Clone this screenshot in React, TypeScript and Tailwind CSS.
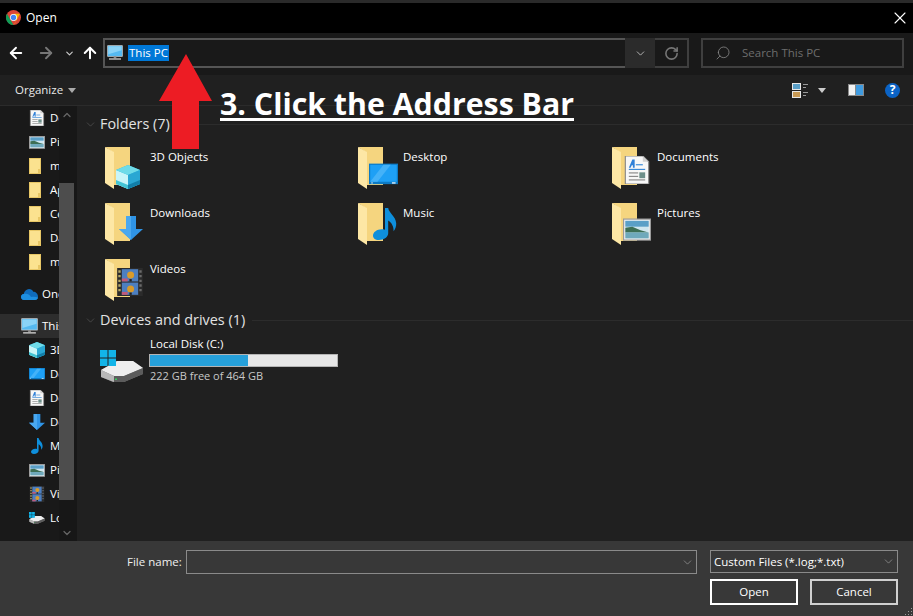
import { ReactNode } from "react";
import { ArrowLeft, ArrowRight, ArrowUp, ChevronDown, RotateCw, Search, X } from "lucide-react";

const Icon = ({ size, children }: { size: number; children: ReactNode }) => (
  <svg width={size} height={size} viewBox="0 0 24 24" className="block shrink-0">
    {children}
  </svg>
);

const Cube = ({ size = 24 }: { size?: number }) => (
  <Icon size={size}>
    <polygon points="12,0 24,5 24,19 12,24 0,19 0,5" fill="#29b6d8" />
    <polygon points="0,5 12,10 12,24 0,19" fill="#c9f5f8" />
    <polygon points="12,0 24,5 12,10 0,5" fill="#6fdbe8" />
    <polygon points="12,10 24,5 24,19 12,24" fill="#2aa7d3" />
    <polygon points="0,15 12,20 12,24 0,19" fill="#43c4d4" />
    <polygon points="12,20 24,15 24,19 12,24" fill="#127ea8" />
  </Icon>
);

const Screen = ({ size = 24 }: { size?: number }) => (
  <Icon size={size}>
    <rect x="0" y="3" width="24" height="17" fill="#0d7ac4" />
    <rect x="1" y="4" width="22" height="14" fill="#1ea0f5" />
    <polygon points="1,18 12,4 18,4 7,18" fill="#44b2f8" />
    <rect x="2" y="18.500" width="1" height="1" fill="#fff" />
    <rect x="19" y="18.500" width="3" height="1" fill="#fff" />
  </Icon>
);

const Doc = ({ size = 24 }: { size?: number }) => (
  <Icon size={size}>
    <polygon points="2,0 17,0 22,5 22,24 2,24" fill="#f7f7f7" stroke="#8a8a8a" />
    <polygon points="17,0 22,5 17,5" fill="#cfcfcf" />
    <polygon points="5,10 8,3 10,3 10,10 8.500,10 8.500,8 7.500,8 6.500,10" fill="#2f80d8" />
    <rect x="11" y="7" width="6" height="1" fill="#3a8ad8" />
    <rect x="5" y="11" width="14" height="1" fill="#3a8ad8" />
    <rect x="5" y="14" width="8" height="1" fill="#8a8a8a" />
    <rect x="14" y="14" width="5" height="5" fill="#6d8f8a" />
    <rect x="5" y="17" width="8" height="1" fill="#8a8a8a" />
    <rect x="5" y="20" width="14" height="1" fill="#8a8a8a" />
  </Icon>
);

const Down = ({ size = 24 }: { size?: number }) => (
  <Icon size={size}>
    <polygon points="7,0 17,0 17,13 24,13 12,24 0,13 7,13" fill="#2f94e6" />
    <polygon points="7,0 12,0 12,24 0,13 7,13" fill="#4aa8ef" />
  </Icon>
);

const Note = ({ size = 24 }: { size?: number }) => (
  <Icon size={size}>
    <path d="M12 0h2.400c.6 4 5.600 6 6 11.500.2 2.400-.8 4.600-2 6 .4-3.800-1.800-7-4-8.200V19c0 2.800-3 5-7 5-3 0-4.400-1.500-4.400-3.200 0-2.600 3-4.800 6.500-4.800.9 0 1.800.1 2.500.4z" fill="#0e8fdc" />
  </Icon>
);

const Picture = ({ size = 24 }: { size?: number }) => (
  <Icon size={size}>
    <rect x="0.500" y="3.500" width="23" height="18" fill="#f1f1f1" stroke="#9a9a9a" />
    <rect x="2" y="5" width="20" height="15" fill="#cfe6ef" />
    <rect x="2" y="5" width="20" height="5" fill="#5a9fc7" />
    <polygon points="2,15 2,11 8,10 15,13 22,15" fill="#3d6f55" />
    <rect x="2" y="15" width="20" height="5" fill="#6fa9bb" />
  </Icon>
);

const Film = ({ size = 24 }: { size?: number }) => (
  <Icon size={size}>
    <rect x="1" y="0" width="22" height="24" fill="#2b2b2b" />
    <path d="M2 2h2v2H2zM2 6h2v2H2zM2 10h2v2H2zM2 14h2v2H2zM2 18h2v2H2z" fill="#b5a866" />
    <path d="M20 2h2v2h-2zM20 6h2v2h-2zM20 10h2v2h-2zM20 14h2v2h-2zM20 18h2v2h-2z" fill="#6b6b6b" />
    <rect x="5" y="1" width="14" height="10.500" fill="#4d7fc0" />
    <rect x="5" y="12.500" width="14" height="10.500" fill="#4d7fc0" />
    <circle cx="12.500" cy="6" r="3" fill="#d99b2b" />
    <circle cx="12.500" cy="18" r="3" fill="#d99b2b" />
    <rect x="5" y="9" width="5" height="2.500" fill="#c05a7a" />
    <rect x="5" y="20.500" width="5" height="2.500" fill="#c05a7a" />
    <rect x="11.500" y="9.500" width="2" height="2" fill="#222222" />
    <rect x="11.500" y="21" width="2" height="2" fill="#222222" />
  </Icon>
);

const Drive = ({ size = 24 }: { size?: number }) => (
  <svg width={size} height={size * 0.75} viewBox="0 0 44 33" className="block shrink-0">
    <polygon points="1,20 17,11 33,11 43,18 43,24 24,32 13,32 1,27" fill="#7a7a7a" />
    <polygon points="1,20 17,11 33,11 43,18 24,26 14,26" fill="#eeeeee" />
    <polygon points="1,20 14,26 14,32 1,27" fill="#b8b8b8" />
    <polygon points="14,26 24,26 43,18 43,24 24,32 14,32" fill="#5c5c5c" />
    <rect x="15" y="28.500" width="2" height="1.500" fill="#31d05a" />
    <rect x="0" y="0" width="7.500" height="7.500" fill="#12b4e8" />
    <rect x="8.500" y="0" width="7.500" height="7.500" fill="#12b4e8" />
    <rect x="0" y="8.500" width="7.500" height="7.500" fill="#12b4e8" />
    <rect x="8.500" y="8.500" width="7.500" height="7.500" fill="#12b4e8" />
  </svg>
);

const Monitor = ({ size = 16 }: { size?: number }) => (
  <Icon size={size}>
    <rect x="1" y="1" width="22" height="16" fill="#55b9f0" stroke="#d6d6d6" />
    <polygon points="2,2 22,2 22,8 2,14" fill="#8ad3f7" />
    <rect x="10" y="17" width="4" height="3" fill="#8a8a8a" />
    <rect x="3" y="20" width="18" height="2" fill="#c9c9c9" />
  </Icon>
);

const MiniFolder = () => (
  <svg width="12" height="16" viewBox="0 0 12 16" className="block shrink-0">
    <rect x="0" y="0" width="12" height="16" fill="#fbe28f" />
    <rect x="0.500" y="0.500" width="11" height="15" fill="none" stroke="#e8c766" />
    <rect x="9" y="11" width="3" height="5" fill="#e8c766" />
  </svg>
);

const Cloud = () => (
  <svg width="17" height="11" viewBox="0 0 17 11" className="block shrink-0">
    <path d="M3 11C1 11 0 9.500 0 8c0-1.600 1.200-2.800 2.700-2.900C3.300 2.200 5.500 0 8 0c2 0 3.500 1 4.300 2.700C14.800 2.700 17 4.800 17 7.500 17 9.500 15.700 11 14 11z" fill="#0f6cbd" />
    <path d="M3 11C1 11 0 9.500 0 8c0-1.600 1.200-2.800 2.700-2.900 3.300-1.200 6.300.6 7.300 3 2-.8 4.800-.5 7 .5-.2 1.500-1.300 2.400-3 2.400z" fill="#1e8fe1" />
  </svg>
);

const Folder = ({ children }: { children?: ReactNode }) => (
  <div className="relative h-[44px] w-[45px] shrink-0">
    <svg width="26" height="42" viewBox="0 0 26 42" className="block">
      <polygon points="0,0 25,0 25,38 9,38 9,6" fill="#f5d57f" />
      <polygon points="0,0 9,5 9,42 0,36" fill="#fde7a5" />
    </svg>
    {children}
  </div>
);

const navTop = [
  { icon: <Doc size={16} />, label: "Documents" },
  { icon: <Picture size={16} />, label: "Pictures" },
  { icon: <MiniFolder />, label: "misc" },
  { icon: <MiniFolder />, label: "Apps" },
  { icon: <MiniFolder />, label: "Code" },
  { icon: <MiniFolder />, label: "Data" },
  { icon: <MiniFolder />, label: "media" },
];

const navPc = [
  { icon: <Cube size={16} />, label: "3D Objects" },
  { icon: <Screen size={16} />, label: "Desktop" },
  { icon: <Doc size={16} />, label: "Documents" },
  { icon: <Down size={16} />, label: "Downloads" },
  { icon: <Note size={16} />, label: "Music" },
  { icon: <Picture size={16} />, label: "Pictures" },
  { icon: <Film size={16} />, label: "Videos" },
  { icon: <Drive size={16} />, label: "Local Disk (C:)" },
];

function NavRow({ icon, label, indent = true, selected = false }: { icon: ReactNode; label: string; indent?: boolean; selected?: boolean }) {
  return (
    <div className={`flex h-6 items-center overflow-hidden whitespace-nowrap text-white ${selected ? "bg-[#2d2d2d]" : ""} ${indent ? "pl-[29px]" : "pl-[21px]"}`}>
      <div className="flex w-[21px] shrink-0 items-center justify-start">{icon}</div>
      <span>{label}</span>
    </div>
  );
}

function SectionHeader({ title }: { title: string }) {
  return (
    <div className="flex h-5 items-center">
      <ChevronDown size={13} strokeWidth={1} className="ml-[7px] mr-[3px] text-[#666666]" />
      <span className="text-[14.400px] text-[#e3e3e3]">{title}</span>
      <div className="ml-[7px] h-px flex-1 bg-[#2c2c2c]" />
    </div>
  );
}

function Tile({ label, children }: { label: string; children?: ReactNode }) {
  return (
    <div className="flex h-14 items-start">
      <Folder>{children}</Folder>
      <span className="leading-5 text-white">{label}</span>
    </div>
  );
}

export default function App() {
  return (
    <div className="relative flex h-[616px] w-[913px] flex-col overflow-hidden bg-[#202020] font-['Open_Sans',sans-serif] text-[11.500px] text-white">
      {/* title bar */}
      <div className="flex h-[33px] items-center border-t-[3px] border-[#2a2a2a] bg-black pl-[6px] pr-[3px]">
        <svg width="15" height="15" viewBox="0 0 24 24" className="mt-[-1px] block">
          <circle cx="12" cy="12" r="12" fill="#db4437" />
          <path d="M12 24A12 12 0 0 1 1.600 6L7 15.500z" fill="#0f9d58" />
          <path d="M12 24l5.500-8.500L22.400 6H12a12 12 0 0 1 0 18z" fill="#f4b400" />
          <circle cx="12" cy="12" r="5.500" fill="#fff" />
          <circle cx="12" cy="12" r="4.300" fill="#4285f4" />
        </svg>
        <span className="ml-[5px] text-[12px]">Open</span>
        <X size={20} strokeWidth={1.300} className="ml-auto" />
      </div>

      {/* address row */}
      <div className="flex h-[42px] items-center bg-[#191919] pb-[2px] pl-[7px]">
        <ArrowLeft size={18} strokeWidth={2.500} className="text-white" />
        <ArrowRight size={18} strokeWidth={2.500} className="ml-[12px] text-[#777777]" />
        <ChevronDown size={11} strokeWidth={2.500} className="ml-[9px] text-[#cccccc]" />
        <ArrowUp size={18} strokeWidth={2.700} className="ml-[6px] text-white" />
        <div className="ml-[4px] flex h-[30px] w-[552px] items-center border-2 border-r-0 border-[#555555] pl-[2px]">
          <Monitor size={16} />
          <span className="ml-[5px] bg-[#0078d7] px-px leading-4 text-white">This PC</span>
          <div className="ml-auto flex h-[30px] w-[30px] items-center justify-center bg-[#2b2b2b]">
            <ChevronDown size={13} strokeWidth={1.500} className="text-[#cccccc]" />
          </div>
        </div>
        <div className="flex h-[30px] w-[34px] items-center justify-center border-2 border-l-0 border-[#3f3f3f] text-[#777777]">
          <RotateCw size={15} strokeWidth={2.500} />
        </div>
        <div className="ml-[12px] flex h-[30px] w-[203px] items-center border-2 border-[#3f3f3f] pl-[12px] text-[#6d6d6d]">
          <Search size={16} strokeWidth={1.200} className="-scale-x-100 text-[#8a8a8a]" />
          <span className="ml-[11px]">Search This PC</span>
        </div>
      </div>

      {/* command bar */}
      <div className="flex h-[31px] items-center border-b border-[#2b2b2b] pl-[15px] pr-[13px]">
        <span className="text-[#e8e8e8]">Organize</span>
        <div className="ml-[5px] h-0 w-0 border-x-4 border-t-[5px] border-x-transparent border-t-[#aaaaaa]" />
        <svg width="16" height="15" viewBox="0 0 16 15" className="ml-auto block">
          <rect x="0" y="0" width="9" height="7" fill="#e8e8e8" />
          <rect x="1" y="1" width="7" height="5" fill="#5a9fc7" />
          <rect x="0" y="8" width="9" height="7" fill="#e8e8e8" />
          <rect x="1" y="9" width="7" height="5" fill="#c89a55" />
          <rect x="11" y="1" width="5" height="1" fill="#999999" />
          <rect x="11" y="4" width="3" height="1" fill="#999999" />
          <rect x="11" y="9" width="5" height="1" fill="#999999" />
          <rect x="11" y="12" width="3" height="1" fill="#999999" />
        </svg>
        <div className="ml-[10px] h-0 w-0 border-x-4 border-t-[5px] border-x-transparent border-t-[#cccccc]" />
        <svg width="16" height="12" viewBox="0 0 16 12" className="ml-[22px] block">
          <rect x="0" y="0" width="16" height="12" fill="#8a8a8a" />
          <rect x="1" y="1" width="6" height="10" fill="#f2f2f2" />
          <rect x="8" y="1" width="7" height="10" fill="#3f9be0" />
        </svg>
        <div className="ml-[21px] flex h-[15px] w-[15px] items-center justify-center rounded-full bg-[#0b63c5] text-[12px] font-bold leading-none text-white">?</div>
      </div>

      {/* body */}
      <div className="flex min-h-0 flex-1">
        <div className="flex w-[74px] shrink-0 bg-[#191919]">
          <div className="w-[59px] shrink-0 overflow-hidden">
            {navTop.map((n, i) => (
              <NavRow key={i} icon={n.icon} label={n.label} />
            ))}
            <div className="mt-2">
              <NavRow icon={<Cloud />} label="OneDrive" indent={false} />
            </div>
            <div className="mt-2">
              <NavRow icon={<Monitor size={17} />} label="This PC" indent={false} selected />
            </div>
            {navPc.map((n, i) => (
              <NavRow key={i} icon={n.icon} label={n.label} />
            ))}
          </div>
          <div className="flex w-[15px] shrink-0 flex-col items-center bg-[#171717]">
            <ChevronDown size={12} strokeWidth={2.500} className="mt-[3px] rotate-180 text-[#666666]" />
            <div className="mt-[62px] h-[317px] w-full bg-[#4d4d4d]" />
            <ChevronDown size={12} strokeWidth={2.500} className="mt-[27px] text-[#666666]" />
          </div>
        </div>
        <div className="w-[3px] shrink-0 bg-[#171717]" />

        <div className="min-w-0 flex-1 pt-[8px]">
          <SectionHeader title="Folders (7)" />
          <div className="ml-[28px] mt-[13px] grid grid-cols-[253px_254px_1fr]">
            <Tile label="3D Objects">
              <div className="absolute left-[11px] top-[18px]"><Cube /></div>
            </Tile>
            <Tile label="Desktop">
              <div className="absolute left-[11px] top-[13px]"><Screen size={29} /></div>
            </Tile>
            <Tile label="Documents">
              <div className="absolute left-[11px] top-[9px]"><Doc size={28} /></div>
            </Tile>
            <Tile label="Downloads">
              <div className="absolute left-[14px] top-[13px]"><Down /></div>
            </Tile>
            <Tile label="Music">
              <div className="absolute left-[11px] top-[5px]"><Note size={32} /></div>
            </Tile>
            <Tile label="Pictures">
              <div className="absolute left-[11px] top-[12px]"><Picture size={28} /></div>
            </Tile>
            <Tile label="Videos">
              <div className="absolute left-[11px] top-[9px]"><Film size={28} /></div>
            </Tile>
          </div>
          <div className="mt-[-5px]">
            <SectionHeader title="Devices and drives (1)" />
          </div>
          <div className="ml-[23px] mt-[4px] flex">
            <div className="mt-[16px]"><Drive size={44} /></div>
            <div className="ml-[6px]">
              <div className="leading-5">Local Disk (C:)</div>
              <div className="-ml-px h-[13px] w-[189px] border border-[#b4b4b4] bg-[#e6e6e6]">
                <div className="h-full bg-[#26a0da]" style={{ width: `${((464 - 222) / 464) * 100}%` }} />
              </div>
              <div className="text-[11px] leading-[18px] text-[#c8c8c8]">222 GB free of 464 GB</div>
            </div>
          </div>
        </div>
      </div>

      {/* footer */}
      <div className="flex h-[75px] items-start bg-[#383838] pt-[9px]">
        <span className="ml-[127px] mt-[3px] w-[59px] text-[#f0f0f0]">File name:</span>
        <div className="flex h-[24px] w-[511px] items-center justify-end border border-[#8a8a8a] pr-[2px]">
          <ChevronDown size={13} strokeWidth={1} className="text-[#bbbbbb]" />
        </div>
        <div className="ml-[13px] w-[188px]">
          <div className="flex h-[23px] items-center justify-between border border-[#8a8a8a] pl-[3px] pr-[2px]">
            <span>Custom Files (*.log;*.txt)</span>
            <ChevronDown size={13} strokeWidth={1} className="text-[#bbbbbb]" />
          </div>
          <div className="mt-[6px] flex justify-between">
            <div className="flex h-[26px] w-[88px] items-center justify-center border-2 border-white">Open</div>
            <div className="flex h-[26px] w-[88px] items-center justify-center border-2 border-[#d0d0d0]">Cancel</div>
          </div>
        </div>
      </div>

      {/* grip */}
      <svg width="8" height="8" viewBox="0 0 8 8" className="absolute bottom-0 right-0 block">
        <rect x="6" y="0" width="1" height="1" fill="#9a9a9a" />
        <rect x="3" y="3" width="1" height="1" fill="#9a9a9a" />
        <rect x="6" y="3" width="1" height="1" fill="#9a9a9a" />
        <rect x="0" y="6" width="1" height="1" fill="#9a9a9a" />
        <rect x="3" y="6" width="1" height="1" fill="#9a9a9a" />
        <rect x="6" y="6" width="1" height="1" fill="#9a9a9a" />
      </svg>

      {/* annotation */}
      <svg width="54" height="96" viewBox="0 0 54 96" className="absolute left-[159px] top-[54px] block">
        <polygon points="27,0 53,47 40,47 40,95 13,95 13,47 0,47" fill="#ed1c24" />
      </svg>
      <div className="absolute left-[220px] top-[89px] whitespace-nowrap border-b-[3px] border-white text-[30.300px] font-bold leading-[29px] text-white">
        3. Click the Address Bar
      </div>
    </div>
  );
}
